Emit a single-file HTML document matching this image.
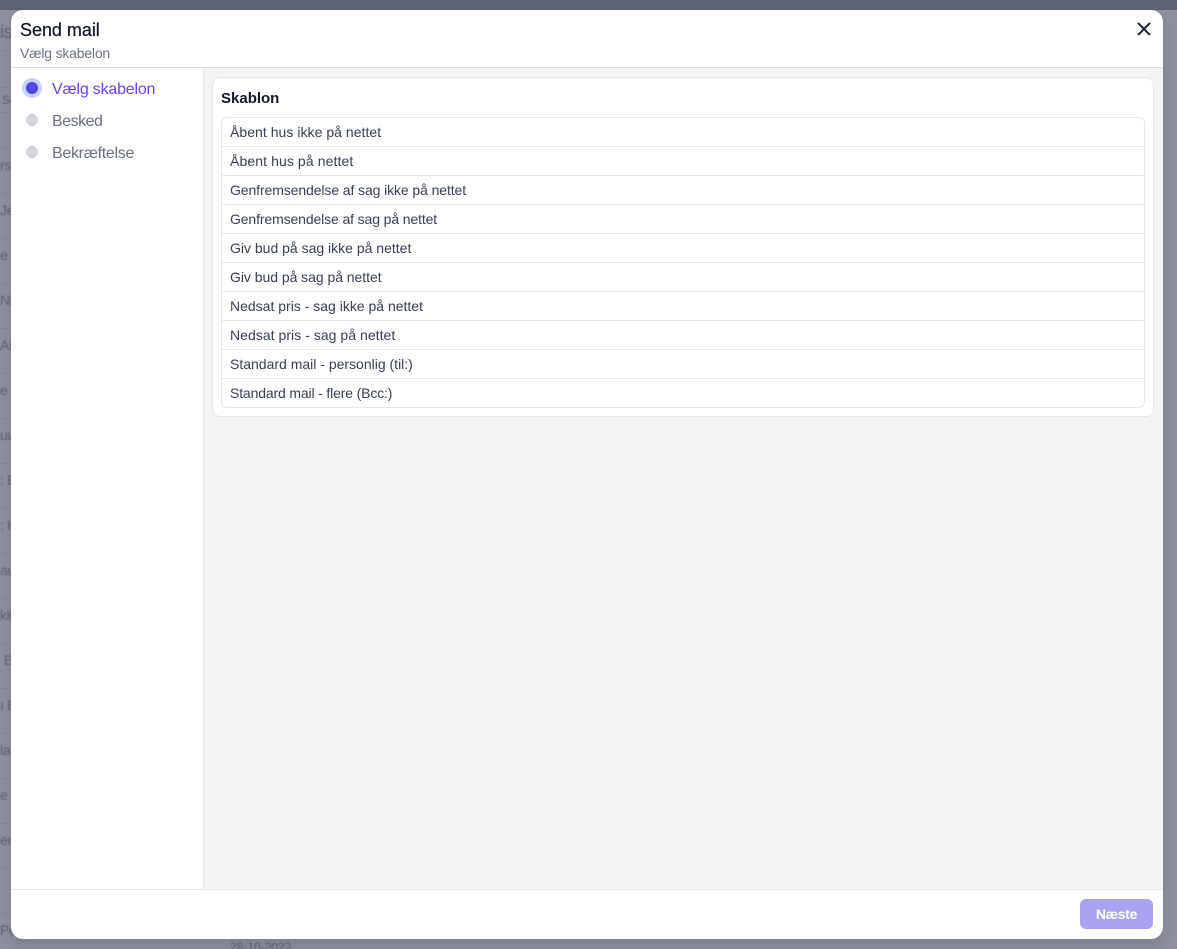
<!DOCTYPE html>
<html lang="da"><head><meta charset="utf-8"><title>Send mail</title>
<style>
*{box-sizing:border-box;margin:0;padding:0}
html,body{width:1177px;height:949px;overflow:hidden}
body{position:relative;background:#8c8f9c;font-family:"Liberation Sans",sans-serif;color:#374151}
.a{position:absolute;white-space:nowrap}
.topbar{left:0;top:0;width:1177px;height:10px;background:#5c6273}
.bg{color:#5f6372;font-size:14px;letter-spacing:-.4px;filter:blur(.4px)}
.ln{left:0;width:11px;height:1px;background:#858895}
.modal{left:11px;top:10px;width:1152px;height:929px;background:#fff;border-radius:12px;overflow:hidden}
.shadow{left:11px;top:10px;width:1152px;height:929px;border-radius:12px;box-shadow:0 8px 14px rgba(0,0,0,.1)}
.m{position:absolute;white-space:nowrap}
.row{position:absolute;left:0;width:921px;height:29px;border-top:1px solid #e5e7eb;font-size:14px;line-height:28px;padding-left:8px;color:#374151}
.row:first-child{border-top:0}
</style></head><body>
<div class="a topbar"></div>
<div class="a bg" style="left:0;top:22px;font-size:18px">is</div>
<div class="a ln" style="top:50px"></div><div class="a ln" style="top:87px"></div><div class="a ln" style="top:112px"></div>
<div class="a ln" style="top:148px"></div><div class="a ln" style="top:193px"></div><div class="a ln" style="top:238px"></div><div class="a ln" style="top:283px"></div><div class="a ln" style="top:328px"></div><div class="a ln" style="top:373px"></div><div class="a ln" style="top:418px"></div><div class="a ln" style="top:463px"></div><div class="a ln" style="top:508px"></div><div class="a ln" style="top:553px"></div><div class="a ln" style="top:598px"></div><div class="a ln" style="top:643px"></div><div class="a ln" style="top:688px"></div><div class="a ln" style="top:733px"></div><div class="a ln" style="top:778px"></div><div class="a ln" style="top:823px"></div><div class="a ln" style="top:868px"></div><div class="a ln" style="top:913px"></div>
<div class="a bg" style="left:2px;top:93px;font-size:12px">Se</div>
<div class="a bg" style="left:0;top:157px">rs</div>
<div class="a bg" style="left:0;top:202px">Je</div>
<div class="a bg" style="left:0;top:247px">e L</div>
<div class="a bg" style="left:0;top:292px">Ni</div>
<div class="a bg" style="left:0;top:337px">An</div>
<div class="a bg" style="left:0;top:382px">e</div>
<div class="a bg" style="left:0;top:427px">uu</div>
<div class="a bg" style="left:0;top:472px">: E</div>
<div class="a bg" style="left:0;top:517px">: K</div>
<div class="a bg" style="left:0;top:562px">au</div>
<div class="a bg" style="left:0;top:607px">kil</div>
<div class="a bg" style="left:4px;top:652px">B</div>
<div class="a bg" style="left:0;top:697px">ı E</div>
<div class="a bg" style="left:0;top:742px">la</div>
<div class="a bg" style="left:0;top:787px">e F</div>
<div class="a bg" style="left:0;top:832px">er</div>
<div class="a bg" style="left:0;top:922px">Pe</div>
<div class="a bg" style="left:230px;top:940px;font-size:12px;letter-spacing:0">28-10-2022</div>

<div class="a shadow"></div>
<div class="a modal">
  <div class="m" style="left:9px;top:9px;font-size:18px;line-height:22px;color:#111827;letter-spacing:-.03px;-webkit-text-stroke:.25px #111827">Send mail</div>
  <div class="m" style="left:9px;top:35px;font-size:14px;line-height:17px;color:#6b7280;letter-spacing:-.2px">Vælg skabelon</div>
  <svg class="m" style="left:1125px;top:11px" width="16" height="16" viewBox="0 0 16 16"><path d="M2 2L14 14M14 2L2 14" stroke="#111827" stroke-width="1.9" fill="none"/></svg>
  <div class="m" style="left:0;top:57px;width:1152px;height:1px;background:#d9dbe1"></div>

  <div class="m" style="left:0;top:58px;width:193px;height:821px;background:#fff;border-right:1px solid #e5e7eb"></div>
  <div class="m" style="left:193px;top:58px;width:959px;height:821px;background:#f3f4f6"></div>

  <div class="m" style="left:11px;top:68px;width:20px;height:20px;border-radius:50%;background:#c7d2fe"></div>
  <div class="m" style="left:15px;top:72px;width:12px;height:12px;border-radius:50%;background:#4f46e5"></div>
  <div class="m" style="left:41px;top:70px;font-size:16px;line-height:19px;color:#6d3ff0;letter-spacing:-.2px">Vælg skabelon</div>
  <div class="m" style="left:15px;top:104px;width:12px;height:12px;border-radius:50%;background:#d1d5db"></div>
  <div class="m" style="left:41px;top:102px;font-size:16px;line-height:19px;color:#6b7280;letter-spacing:-.5px">Besked</div>
  <div class="m" style="left:15px;top:136px;width:12px;height:12px;border-radius:50%;background:#d1d5db"></div>
  <div class="m" style="left:41px;top:134px;font-size:16px;line-height:19px;color:#6b7280;letter-spacing:-.3px">Bekræftelse</div>

  <div class="m" style="left:201px;top:67px;width:942px;height:340px;background:#fff;border:1px solid #e5e7eb;border-radius:8px"></div>
  <div class="m" style="left:210px;top:80px;font-size:15px;line-height:18px;font-weight:700;color:#111827">Skablon</div>
  <div class="m" style="left:210px;top:107px;width:924px;height:291px;border:1px solid #e5e7eb;border-radius:6px;overflow:hidden;background:#fff">
    <div class="row" style="top:0;letter-spacing:.04px">Åbent hus ikke på nettet</div>
    <div class="row" style="top:28px;letter-spacing:.1px">Åbent hus på nettet</div>
    <div class="row" style="top:57px;letter-spacing:-.1px">Genfremsendelse af sag ikke på nettet</div>
    <div class="row" style="top:86px;letter-spacing:-.12px">Genfremsendelse af sag på nettet</div>
    <div class="row" style="top:115px">Giv bud på sag ikke på nettet</div>
    <div class="row" style="top:144px;letter-spacing:-.04px">Giv bud på sag på nettet</div>
    <div class="row" style="top:173px">Nedsat pris - sag ikke på nettet</div>
    <div class="row" style="top:202px;letter-spacing:.04px">Nedsat pris - sag på nettet</div>
    <div class="row" style="top:231px">Standard mail - personlig (til:)</div>
    <div class="row" style="top:260px;letter-spacing:-.15px">Standard mail - flere (Bcc:)</div>
  </div>

  <div class="m" style="left:0;top:879px;width:1152px;height:1px;background:#e5e7eb"></div>
  <div class="m" style="left:1069px;top:889px;width:73px;height:30px;border-radius:6px;background:#a9a3f2;color:#fff;font-size:14px;font-weight:700;line-height:30px;text-align:center;letter-spacing:-.3px">Næste</div>
</div>
</body></html>
